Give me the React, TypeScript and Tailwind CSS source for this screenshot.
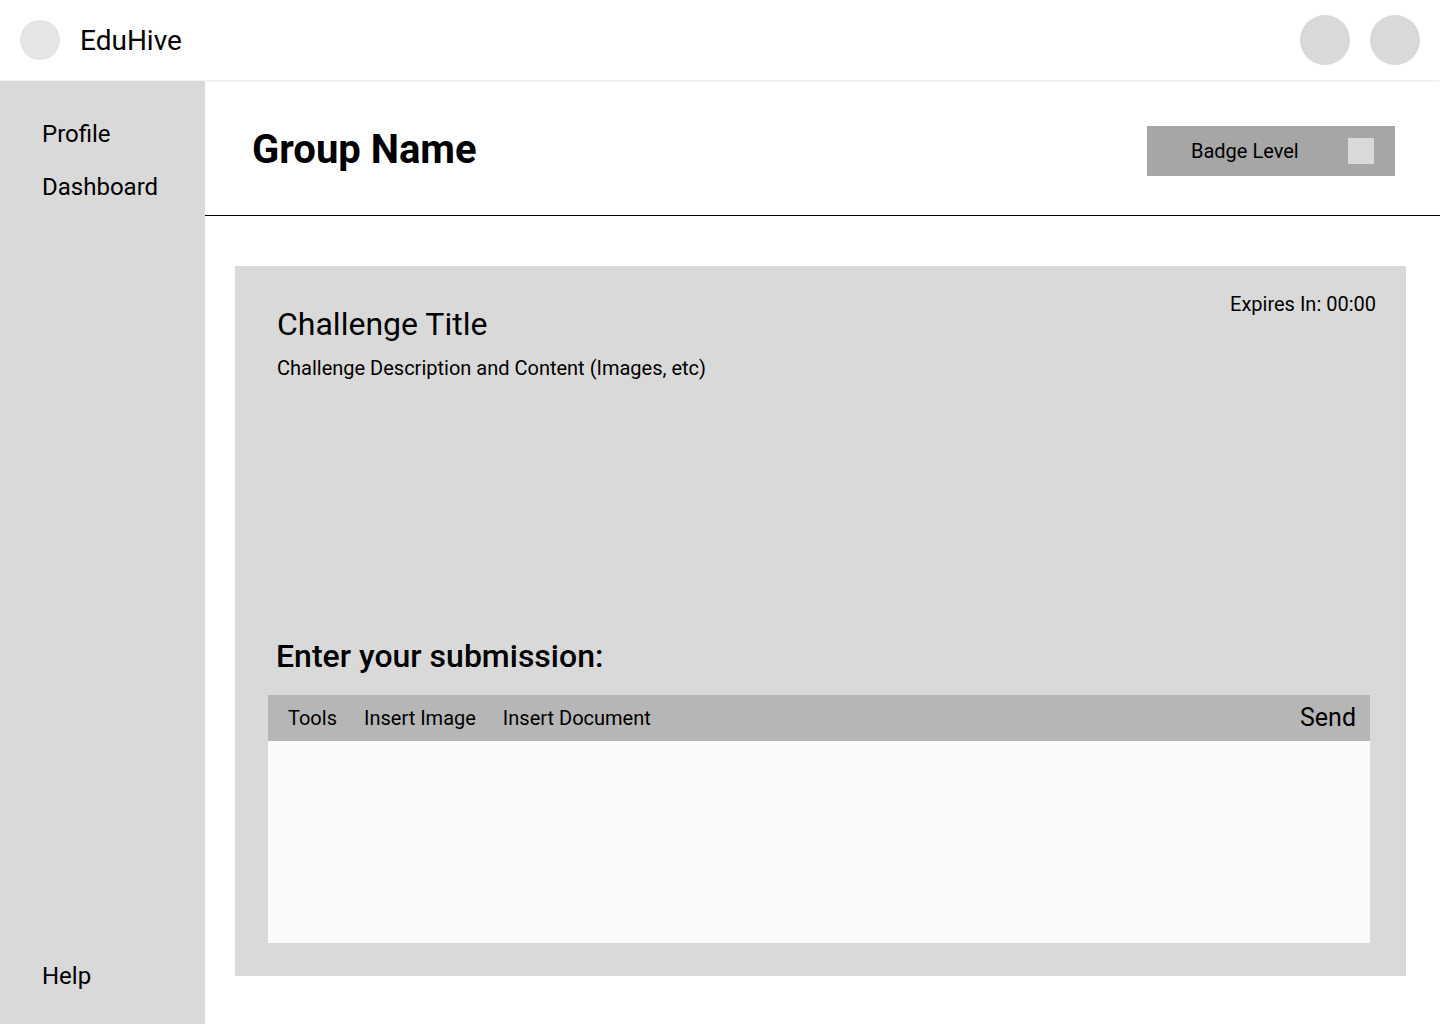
import type { ReactNode } from 'react'

// Wireframe-style challenge page: top bar, grey sidebar, group header and a
// challenge card with a submission editor.
function NavItem({ children }: { children: ReactNode }) {
  return <a className="block text-[24px] leading-[28px] text-black">{children}</a>
}

export default function App() {
  return (
    <div className="h-screen w-full flex flex-col bg-white text-black font-['Roboto',sans-serif] overflow-hidden">
      <header className="h-[81px] shrink-0 flex items-center justify-between pl-5 pr-5 border-b border-[#f0f0f0] shadow-[0_1px_2px_rgba(0,0,0,0.04)]">
        <div className="flex items-center gap-5">
          <div className="w-10 h-10 rounded-full bg-[#e6e6e6]" />
          <span className="text-[28px] leading-none pt-[2px]">EduHive</span>
        </div>
        <div className="flex items-center gap-5">
          <div className="w-[50px] h-[50px] rounded-full bg-[#d9d9d9]" />
          <div className="w-[50px] h-[50px] rounded-full bg-[#d9d9d9]" />
        </div>
      </header>

      <div className="flex-1 flex min-h-0">
        <aside className="w-[205px] shrink-0 bg-[#d9d9d9] flex flex-col justify-between pl-[42px] pt-[39px] pb-[34px]">
          <nav className="flex flex-col gap-[25px]">
            <NavItem>Profile</NavItem>
            <NavItem>Dashboard</NavItem>
          </nav>
          <NavItem>Help</NavItem>
        </aside>

        <main className="flex-1 flex flex-col min-w-0">
          <div className="h-[135px] shrink-0 flex items-center justify-between pl-[47px] pr-[45px] pt-[4px] border-b border-black">
            <h1 className="m-0 text-[40px] font-bold leading-none">Group Name</h1>
            <div className="mt-[2px] w-[248px] h-[50px] bg-[#a6a6a6] flex items-center justify-between pl-[44px] pr-[21px]">
              <span className="text-[20px]">Badge Level</span>
              <div className="w-[26px] h-[26px] bg-[#d9d9d9]" />
            </div>
          </div>

          <div className="flex-1 pt-[50px] pl-[30px] pr-[34px] pb-[48px]">
            <section className="h-[710px] bg-[#d9d9d9] flex flex-col pl-[33px] pr-[36px] pt-[27px]">
              <div className="flex justify-between">
                <div className="pl-[9px] pt-[13px]">
                  <h2 className="m-0 text-[32px] leading-[36px]">Challenge Title</h2>
                  <p className="m-0 mt-[15px] text-[20px] leading-[22px]">
                    Challenge Description and Content (Images, etc)
                  </p>
                </div>
                <span className="text-[20px] leading-[22px] mr-[-6px]">Expires In: 00:00</span>
              </div>

              <h3 className="m-0 mt-[259px] pl-[8px] text-[32px] leading-[36px] font-medium">
                Enter your submission:
              </h3>

              <div className="mt-[21px] flex flex-col">
                <div className="h-[46px] bg-[#b6b6b6] flex items-center justify-between pl-[20px] pr-[14px]">
                  <div className="flex items-center gap-[27px] text-[20px]">
                    <span>Tools</span>
                    <span>Insert Image</span>
                    <span>Insert Document</span>
                  </div>
                  <span className="text-[25px]">Send</span>
                </div>
                <div className="h-[202px] bg-[#fafafa]" />
              </div>
            </section>
          </div>
        </main>
      </div>
    </div>
  )
}
